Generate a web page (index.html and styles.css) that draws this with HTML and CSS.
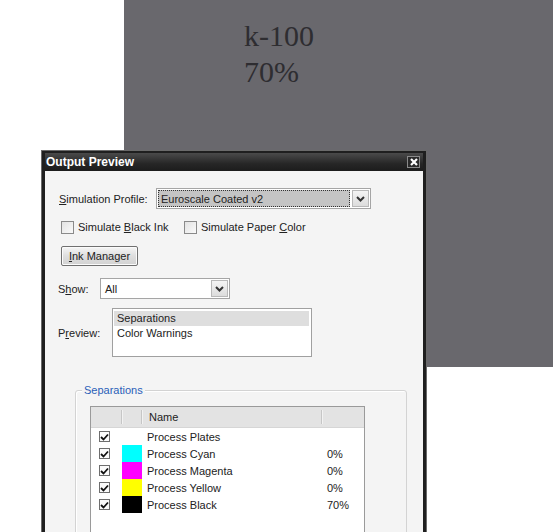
FILE: index.html
```html
<!DOCTYPE html>
<html>
<head>
<meta charset="utf-8">
<link rel="stylesheet" href="styles.css">
</head>
<body>
<div class="desk">
  <div class="canvas">
    <div class="note">k-100<br>70%</div>
  </div>

  <div class="dialog">
    <div class="titlebar">
      <span class="title">Output Preview</span>
      <span class="close">
        <svg width="8" height="8" viewBox="0 0 8 8"><path d="M1 1 L7 7 M7 1 L1 7" stroke="#fff" stroke-width="2.2"/></svg>
      </span>
    </div>
    <div class="body">
      <div class="row r-profile">
        <span class="label lbl-profile"><u>S</u>imulation Profile:</span>
        <div class="select sel-profile">
          <span class="value focused">Euroscale Coated v2</span>
          <span class="arrow"><svg width="9" height="6" viewBox="0 0 9 6"><path d="M1 1 L4.5 4.5 L8 1" fill="none" stroke="#333" stroke-width="2"/></svg></span>
        </div>
      </div>

      <div class="row r-checks">
        <label class="check c1"><span class="box"></span><span>Simulate <u>B</u>lack Ink</span></label>
        <label class="check"><span class="box"></span><span>Simulate Paper <u>C</u>olor</span></label>
      </div>

      <div class="row r-button">
        <span class="button"><span><u>I</u>nk Manager</span></span>
      </div>

      <div class="row r-show">
        <span class="label lbl-show">S<u>h</u>ow:</span>
        <div class="select sel-show">
          <span class="value">All</span>
          <span class="arrow"><svg width="9" height="6" viewBox="0 0 9 6"><path d="M1 1 L4.5 4.5 L8 1" fill="none" stroke="#333" stroke-width="2"/></svg></span>
        </div>
      </div>

      <div class="row r-preview">
        <span class="label lbl-preview">P<u>r</u>eview:</span>
        <div class="list">
          <div class="item selected">Separations</div>
          <div class="item">Color Warnings</div>
        </div>
      </div>

      <div class="group">
        <span class="legend">Separations</span>
        <div class="table">
          <div class="thead">
            <span class="th"></span>
            <span class="th"></span>
            <span class="th name">Name</span>
            <span class="th last"></span>
          </div>
          <div class="tr">
            <span class="td"><span class="tick"><svg width="9" height="8" viewBox="0 0 9 8"><path d="M1 4 L3.5 6.5 L8 1.5" fill="none" stroke="#111" stroke-width="1.8"/></svg></span></span>
            <span class="td"></span>
            <span class="td text">Process Plates</span>
            <span class="td pct"></span>
          </div>
          <div class="tr">
            <span class="td"><span class="tick"><svg width="9" height="8" viewBox="0 0 9 8"><path d="M1 4 L3.5 6.5 L8 1.5" fill="none" stroke="#111" stroke-width="1.8"/></svg></span></span>
            <span class="td"><span class="swatch cyan"></span></span>
            <span class="td text">Process Cyan</span>
            <span class="td pct">0%</span>
          </div>
          <div class="tr">
            <span class="td"><span class="tick"><svg width="9" height="8" viewBox="0 0 9 8"><path d="M1 4 L3.5 6.5 L8 1.5" fill="none" stroke="#111" stroke-width="1.8"/></svg></span></span>
            <span class="td"><span class="swatch magenta"></span></span>
            <span class="td text">Process Magenta</span>
            <span class="td pct">0%</span>
          </div>
          <div class="tr">
            <span class="td"><span class="tick"><svg width="9" height="8" viewBox="0 0 9 8"><path d="M1 4 L3.5 6.5 L8 1.5" fill="none" stroke="#111" stroke-width="1.8"/></svg></span></span>
            <span class="td"><span class="swatch yellow"></span></span>
            <span class="td text">Process Yellow</span>
            <span class="td pct">0%</span>
          </div>
          <div class="tr">
            <span class="td"><span class="tick"><svg width="9" height="8" viewBox="0 0 9 8"><path d="M1 4 L3.5 6.5 L8 1.5" fill="none" stroke="#111" stroke-width="1.8"/></svg></span></span>
            <span class="td"><span class="swatch black"></span></span>
            <span class="td text">Process Black</span>
            <span class="td pct">70%</span>
          </div>
        </div>
      </div>
    </div>
  </div>
</div>
</body>
</html>
```

FILE: styles.css
```css
html, body {
  margin: 0;
  padding: 0;
  background: #ffffff;
  overflow: hidden;
}

.desk {
  position: relative;
  width: 553px;
  height: 532px;
  overflow: hidden;
}

.canvas {
  margin-left: 124px;
  height: 367px;
  background: #69686d;
  padding: 18px 0 0 120px;
  box-sizing: border-box;
}

.note {
  font-family: "Liberation Serif", serif;
  font-size: 30px;
  line-height: 36px;
  color: #2e2d31;
}

.dialog {
  position: absolute;
  left: 42px;
  top: 151px;
  width: 384px;
  height: 420px;
  box-sizing: border-box;
  border: 3px solid #1f1f1f;
  border-top-width: 2px;
  box-shadow: 0 0 0 1px #6a6a6a;
  background: #f4f4f4;
  font-family: "Liberation Sans", Arial, sans-serif;
  font-size: 11px;
  color: #222;
}

.titlebar {
  height: 18px;
  background: linear-gradient(#4a4a4a, #262626 60%, #1c1c1c);
  display: flex;
  align-items: center;
  justify-content: space-between;
  padding: 0 3px 0 1px;
}

.title {
  color: #fff;
  font-weight: bold;
  font-size: 12px;
}

.close {
  width: 11px;
  height: 10px;
  border: 1px solid #8a8a8a;
  background: #2a2a2a;
  display: flex;
  align-items: center;
  justify-content: center;
}

.body {
  padding: 17px 0 0 0;
}

.row {
  display: flex;
  align-items: center;
}

.label {
  flex: none;
}

.r-profile {
  padding-left: 14px;
  height: 21px;
}

.lbl-profile {
  width: 97px;
}

.select {
  display: flex;
  align-items: stretch;
  box-sizing: border-box;
  height: 21px;
  border: 1px solid #a5a5a5;
  background: #fff;
  padding: 1px;
}

.sel-profile {
  width: 215px;
}

.sel-show {
  width: 130px;
}

.value {
  flex: 1;
  display: flex;
  align-items: center;
  padding-left: 3px;
}

.value.focused {
  background: #c4c4c4;
  outline: 1px dotted #333;
  outline-offset: -1px;
}

.arrow {
  width: 15px;
  margin-left: 2px;
  border: 1px solid #b8b8b8;
  background: linear-gradient(#f4f4f4, #dcdcdc);
  display: flex;
  align-items: center;
  justify-content: center;
}

.r-checks {
  padding-left: 16px;
  margin-top: 11px;
  height: 14px;
}

.check {
  display: flex;
  align-items: center;
}

.check.c1 {
  width: 123px;
}

.box {
  width: 11px;
  height: 11px;
  border: 1px solid #8a8a8a;
  background: linear-gradient(135deg, #e2e2e2, #fafafa);
  margin-right: 4px;
}

.r-button {
  padding-left: 16px;
  margin-top: 12px;
}

.button {
  width: 77px;
  height: 20px;
  box-sizing: border-box;
  border: 1px solid #707070;
  border-radius: 2px;
  background: linear-gradient(#f6f6f6, #dedede 50%, #d2d2d2);
  display: flex;
  align-items: center;
  justify-content: center;
  box-shadow: inset 0 0 0 1px #fbfbfb;
}

.r-show {
  padding-left: 13px;
  margin-top: 12px;
  height: 21px;
}

.lbl-show {
  width: 42px;
}

.r-preview {
  padding-left: 13px;
  margin-top: 9px;
}

.lbl-preview {
  width: 54px;
}

.list {
  width: 200px;
  height: 49px;
  box-sizing: border-box;
  border: 1px solid #a0a0a0;
  background: #fff;
  padding: 2px 2px 0 1px;
}

.item {
  height: 15px;
  line-height: 15px;
  padding-left: 3px;
}

.item.selected {
  background: #dedede;
}

.group {
  position: relative;
  margin: 33px 0 0 30px;
  width: 332px;
  height: 200px;
  box-sizing: border-box;
  border: 1px solid #d3d3d3;
  border-radius: 3px;
  box-shadow: inset 1px 1px 0 #fff;
  padding: 15px 0 0 14px;
}

.legend {
  position: absolute;
  left: 6px;
  top: -8px;
  background: #f4f4f4;
  color: #2a5fb8;
  padding: 0 2px;
  line-height: 14px;
}

.table {
  width: 275px;
  height: 160px;
  box-sizing: border-box;
  border: 1px solid #9a9a9a;
  background: #fff;
}

.thead, .tr {
  display: grid;
  grid-template-columns: 31px 20px 180px 1fr;
}

.thead {
  height: 20px;
  background: #e3e3e3;
  border-bottom: 1px solid #d6d6d6;
}

.th {
  display: flex;
  align-items: center;
  border-right: 1px solid #c6c6c6;
  box-shadow: 1px 0 0 #f2f2f2;
  margin: 3px 0;
}

.th.name {
  padding-left: 7px;
}

.th.last {
  border-right: none;
  box-shadow: none;
}

.tr {
  height: 17px;
}

.td {
  display: flex;
  align-items: center;
}

.tick {
  margin-left: 8px;
  width: 11px;
  height: 11px;
  box-sizing: border-box;
  border: 1px solid #6e6e6e;
  background: #fbfbfb;
  display: flex;
  align-items: center;
  justify-content: center;
}

.swatch {
  width: 20px;
  height: 17px;
}

.cyan { background: #00ffff; }
.magenta { background: #ff00ff; }
.yellow { background: #ffff00; }
.black { background: #000000; }

.text {
  padding-left: 5px;
}

.pct {
  padding-left: 5px;
}
```
